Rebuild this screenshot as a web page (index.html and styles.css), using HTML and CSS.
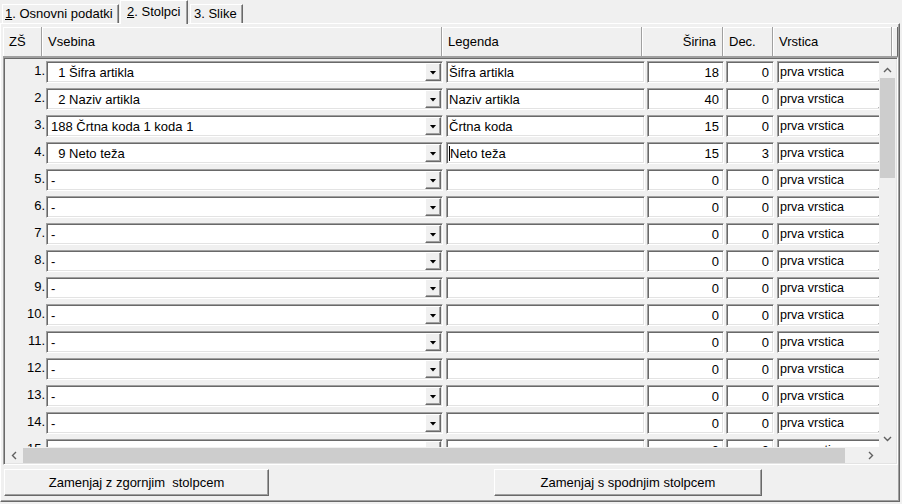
FILE: index.html
```html
<!DOCTYPE html>
<html lang="sl">
  <head>
    <meta charset="UTF-8" />
    <title>Stolpci</title>
    <link rel="stylesheet" href="styles.css">
  </head>
  <body>
    <div class="tabs">
      <div class="tab tab-1"><u>1</u>. Osnovni podatki</div>
      <div class="tab tab-2 active"><u>2</u>. Stolpci</div>
      <div class="tab tab-3">3. Slike</div>
    </div>

    <div class="page">
      <div class="grid">
        <div class="grid-head">
          <div class="hc c-zs">ZŠ</div>
          <div class="hc c-vsebina">Vsebina</div>
          <div class="hc c-legenda">Legenda</div>
          <div class="hc c-sirina">Širina</div>
          <div class="hc c-dec">Dec.</div>
          <div class="hc c-vrstica">Vrstica</div>
          <div class="hc c-fill"></div>
        </div>

        <div class="grid-box">
          <div class="scroll-area">
            <div class="viewport">
              <div class="row">
                <div class="num">1.</div>
                <div class="cell combo vsebina"><span class="val">  1 Šifra artikla</span><span class="drop"></span></div>
                <div class="cell legenda">Šifra artikla</div>
                <div class="cell sirina">18</div>
                <div class="cell dec">0</div>
                <div class="cell combo vrstica"><span class="val">prva vrstica</span><span class="drop"></span></div>
              </div>
              <div class="row">
                <div class="num">2.</div>
                <div class="cell combo vsebina"><span class="val">  2 Naziv artikla</span><span class="drop"></span></div>
                <div class="cell legenda">Naziv artikla</div>
                <div class="cell sirina">40</div>
                <div class="cell dec">0</div>
                <div class="cell combo vrstica"><span class="val">prva vrstica</span><span class="drop"></span></div>
              </div>
              <div class="row">
                <div class="num">3.</div>
                <div class="cell combo vsebina"><span class="val">188 Črtna koda 1 koda 1</span><span class="drop"></span></div>
                <div class="cell legenda">Črtna koda</div>
                <div class="cell sirina">15</div>
                <div class="cell dec">0</div>
                <div class="cell combo vrstica"><span class="val">prva vrstica</span><span class="drop"></span></div>
              </div>
              <div class="row">
                <div class="num">4.</div>
                <div class="cell combo vsebina"><span class="val">  9 Neto teža</span><span class="drop"></span></div>
                <div class="cell legenda"><span class="caret"></span>Neto teža</div>
                <div class="cell sirina">15</div>
                <div class="cell dec">3</div>
                <div class="cell combo vrstica"><span class="val">prva vrstica</span><span class="drop"></span></div>
              </div>
              <div class="row">
                <div class="num">5.</div>
                <div class="cell combo vsebina"><span class="val">-</span><span class="drop"></span></div>
                <div class="cell legenda"></div>
                <div class="cell sirina">0</div>
                <div class="cell dec">0</div>
                <div class="cell combo vrstica"><span class="val">prva vrstica</span><span class="drop"></span></div>
              </div>
              <div class="row">
                <div class="num">6.</div>
                <div class="cell combo vsebina"><span class="val">-</span><span class="drop"></span></div>
                <div class="cell legenda"></div>
                <div class="cell sirina">0</div>
                <div class="cell dec">0</div>
                <div class="cell combo vrstica"><span class="val">prva vrstica</span><span class="drop"></span></div>
              </div>
              <div class="row">
                <div class="num">7.</div>
                <div class="cell combo vsebina"><span class="val">-</span><span class="drop"></span></div>
                <div class="cell legenda"></div>
                <div class="cell sirina">0</div>
                <div class="cell dec">0</div>
                <div class="cell combo vrstica"><span class="val">prva vrstica</span><span class="drop"></span></div>
              </div>
              <div class="row">
                <div class="num">8.</div>
                <div class="cell combo vsebina"><span class="val">-</span><span class="drop"></span></div>
                <div class="cell legenda"></div>
                <div class="cell sirina">0</div>
                <div class="cell dec">0</div>
                <div class="cell combo vrstica"><span class="val">prva vrstica</span><span class="drop"></span></div>
              </div>
              <div class="row">
                <div class="num">9.</div>
                <div class="cell combo vsebina"><span class="val">-</span><span class="drop"></span></div>
                <div class="cell legenda"></div>
                <div class="cell sirina">0</div>
                <div class="cell dec">0</div>
                <div class="cell combo vrstica"><span class="val">prva vrstica</span><span class="drop"></span></div>
              </div>
              <div class="row">
                <div class="num">10.</div>
                <div class="cell combo vsebina"><span class="val">-</span><span class="drop"></span></div>
                <div class="cell legenda"></div>
                <div class="cell sirina">0</div>
                <div class="cell dec">0</div>
                <div class="cell combo vrstica"><span class="val">prva vrstica</span><span class="drop"></span></div>
              </div>
              <div class="row">
                <div class="num">11.</div>
                <div class="cell combo vsebina"><span class="val">-</span><span class="drop"></span></div>
                <div class="cell legenda"></div>
                <div class="cell sirina">0</div>
                <div class="cell dec">0</div>
                <div class="cell combo vrstica"><span class="val">prva vrstica</span><span class="drop"></span></div>
              </div>
              <div class="row">
                <div class="num">12.</div>
                <div class="cell combo vsebina"><span class="val">-</span><span class="drop"></span></div>
                <div class="cell legenda"></div>
                <div class="cell sirina">0</div>
                <div class="cell dec">0</div>
                <div class="cell combo vrstica"><span class="val">prva vrstica</span><span class="drop"></span></div>
              </div>
              <div class="row">
                <div class="num">13.</div>
                <div class="cell combo vsebina"><span class="val">-</span><span class="drop"></span></div>
                <div class="cell legenda"></div>
                <div class="cell sirina">0</div>
                <div class="cell dec">0</div>
                <div class="cell combo vrstica"><span class="val">prva vrstica</span><span class="drop"></span></div>
              </div>
              <div class="row">
                <div class="num">14.</div>
                <div class="cell combo vsebina"><span class="val">-</span><span class="drop"></span></div>
                <div class="cell legenda"></div>
                <div class="cell sirina">0</div>
                <div class="cell dec">0</div>
                <div class="cell combo vrstica"><span class="val">prva vrstica</span><span class="drop"></span></div>
              </div>
              <div class="row">
                <div class="num">15.</div>
                <div class="cell combo vsebina"><span class="val">-</span><span class="drop"></span></div>
                <div class="cell legenda"></div>
                <div class="cell sirina">0</div>
                <div class="cell dec">0</div>
                <div class="cell combo vrstica"><span class="val">prva vrstica</span><span class="drop"></span></div>
              </div>
            </div>

            <div class="vscroll">
              <div class="sb-btn">
                <svg width="9" height="6" viewBox="0 0 9 6"><polyline points="1,5 4.5,1.5 8,5" /></svg>
              </div>
              <div class="sb-track v">
                <div class="thumb v-thumb"></div>
              </div>
              <div class="sb-btn">
                <svg width="9" height="6" viewBox="0 0 9 6"><polyline points="1,1 4.5,4.5 8,1" /></svg>
              </div>
            </div>
          </div>

          <div class="hscroll">
            <div class="sb-btn h">
              <svg width="6" height="9" viewBox="0 0 6 9"><polyline points="5,1 1.5,4.5 5,8" /></svg>
            </div>
            <div class="sb-track h">
              <div class="thumb h-thumb"></div>
            </div>
            <div class="sb-btn h">
              <svg width="6" height="9" viewBox="0 0 6 9"><polyline points="1,1 4.5,4.5 1,8" /></svg>
            </div>
            <div class="corner"></div>
          </div>
        </div>
      </div>

      <div class="actions">
        <button class="btn btn-up">Zamenjaj z zgornjim  stolpcem</button>
        <button class="btn btn-down">Zamenjaj s spodnjim stolpcem</button>
      </div>
    </div>
  </body>
</html>
```

FILE: styles.css
```css
* {
  margin: 0;
  padding: 0;
  box-sizing: border-box;
}
body {
  width: 902px;
  height: 504px;
  overflow: hidden;
  background: #f0f0f0;
  color: #000;
  font: 13px "Liberation Sans", Arial, sans-serif;
}

/* zavihki */
.tabs {
  display: flex;
  align-items: flex-end;
  height: 23px;
  padding-left: 2px;
  position: relative;
  z-index: 2;
}
.tab {
  height: 19px;
  line-height: 17px;
  background: #f0f0f0;
  border: 1px solid #fff;
  border-right-color: #696969;
  border-bottom: none;
  box-shadow: inset -1px 0 0 #a0a0a0;
  white-space: nowrap;
}
.tab-1 {
  width: 117px;
  padding-left: 2px;
}
.tab-2 {
  width: 68px;
  margin-left: 1px;
  padding-left: 6px;
}
.tab-3 {
  width: 53px;
  margin-left: 2px;
  padding-left: 3px;
}
.tab.active {
  height: 24px;
  line-height: 21px;
  margin-bottom: -1px;
}

/* stran zavihka */
.page {
  width: 900px;
  height: 479px;
  border: 1px solid #fff;
  border-right-color: #696969;
  border-bottom-color: #696969;
  box-shadow: inset -1px -1px 0 #a0a0a0;
}
.grid {
  width: 895px;
  margin: 3px 0 0 2px;
}

/* glava mreže */
.grid-head {
  display: flex;
  height: 30px;
}
.hc {
  flex-shrink: 0;
  height: 30px;
  line-height: 29px;
  padding: 0 6px;
  border-right: 1px solid #a0a0a0;
  border-bottom: 1px solid #a0a0a0;
  box-shadow: inset 1px 1px 0 #fff;
  white-space: nowrap;
}
.c-zs { width: 39px; }
.c-vsebina { width: 400px; }
.c-legenda { width: 200px; }
.c-sirina { width: 81px; text-align: right; }
.c-dec { width: 50px; }
.c-vrstica { width: 119px; }
.c-fill {
  flex: 1 1 auto;
  padding: 0;
  border-right-color: #696969;
}

/* vsebina mreže */
.grid-box {
  height: 408px;
  padding: 1px;
  border: 1px solid #a0a0a0;
  border-right-color: #fff;
  border-bottom-color: #fff;
  box-shadow: inset 1px 1px 0 #696969, inset -1px -1px 0 #e3e3e3;
}
.scroll-area {
  display: flex;
  height: 388px;
  padding-top: 2px;
}
.viewport {
  width: 874px;
  height: 386px;
  overflow: hidden;
}
.row {
  display: flex;
  height: 27px;
}
.num {
  width: 41px;
  flex-shrink: 0;
  padding-right: 1px;
  line-height: 19px;
  text-align: right;
}
.cell {
  flex-shrink: 0;
  height: 22px;
  padding-top: 1px;
  line-height: 19px;
  background: #fff;
  border: 1px solid #a0a0a0;
  border-right-color: #fff;
  border-bottom-color: #fff;
  box-shadow: inset 1px 1px 0 #696969, inset -1px -1px 0 #e3e3e3;
  white-space: pre;
  overflow: hidden;
}
.vsebina { width: 397px; padding-left: 4px; }
.legenda { width: 199px; margin-left: 3px; padding-left: 2px; }
.sirina { width: 77px; margin-left: 2px; padding-right: 4px; text-align: right; }
.dec { width: 48px; margin-left: 2px; padding-right: 4px; text-align: right; }
.vrstica { width: 119px; margin-left: 3px; padding-left: 2px; font-size: 12.5px; }

.combo {
  display: flex;
  padding-top: 0;
}
.combo .val {
  flex: 1;
  padding-top: 1px;
  overflow: hidden;
}
.drop {
  width: 16px;
  height: 18px;
  margin: 1px 1px 0 0;
  display: flex;
  align-items: center;
  justify-content: center;
  background: #f0f0f0;
  border: 1px solid #fff;
  border-right-color: #696969;
  border-bottom-color: #696969;
  box-shadow: inset -1px -1px 0 #a0a0a0;
}
.drop::after {
  content: "";
  width: 7px;
  height: 4px;
  margin-top: 1px;
  background: #000;
  clip-path: polygon(0 0, 100% 0, 50% 100%);
}
.caret {
  display: inline-block;
  width: 1px;
  height: 15px;
  background: #000;
  vertical-align: -3px;
}

/* drsniki */
.vscroll {
  width: 17px;
  height: 386px;
  display: flex;
  flex-direction: column;
}
.sb-btn {
  height: 17px;
  flex-shrink: 0;
  display: flex;
  align-items: center;
  justify-content: center;
}
.sb-btn svg polyline {
  fill: none;
  stroke: #606060;
  stroke-width: 1.4;
}
.sb-track {
  flex: 1;
  display: flex;
}
.sb-track.v {
  flex-direction: column;
}
.thumb {
  background: #cdcdcd;
}
.v-thumb {
  height: 100px;
  margin: 0 1px;
}
.hscroll {
  display: flex;
  height: 16px;
}
.sb-btn.h {
  width: 17px;
  height: 16px;
}
.h-thumb {
  width: 822px;
  margin: 1px 0 0 1px;
}
.corner {
  width: 17px;
}

/* gumbi */
.actions {
  display: flex;
  margin-top: 4px;
  padding-left: 3px;
}
.btn {
  height: 27px;
  font: inherit;
  color: #000;
  white-space: pre;
  background: #f0f0f0;
  border: 1px solid #fff;
  border-right-color: #696969;
  border-bottom-color: #696969;
  box-shadow: inset -1px -1px 0 #a0a0a0;
}
.btn-up { width: 265px; }
.btn-down { width: 268px; margin-left: 225px; }
```
